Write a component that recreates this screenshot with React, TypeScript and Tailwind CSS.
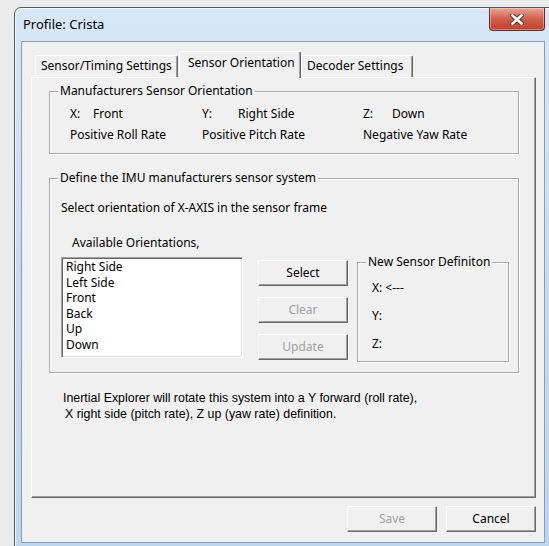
import React from "react";

const ui = "font-['Noto_Sans',sans-serif] text-[12px] text-black";

// classic raised 3D push button
const Btn = ({ label, disabled = false, className = "" }: { label: string; disabled?: boolean; className?: string }) => (
  <div
    className={`flex h-[26px] w-[90px] items-center justify-center border border-t-white border-l-white border-r-[#696969] border-b-[#696969] bg-[#f0f0f0] shadow-[inset_-1px_-1px_0_#a0a0a0] leading-none ${
      disabled ? "text-[#a0a0a0]" : "text-black"
    } ${className}`}
  >
    {label}
  </div>
);

// etched group box; padding goes on the inner div so the legend stays put
const Group = ({
  title,
  className = "",
  inner = "",
  children,
}: {
  title: string;
  className?: string;
  inner?: string;
  children: React.ReactNode;
}) => (
  <fieldset className={`border border-[#a9a9a9] shadow-[inset_1px_1px_0_white,1px_1px_0_white] ${className}`}>
    <legend className="ml-[8px] bg-[#f0f0f0] px-[2px] leading-[14px]">{title}</legend>
    <div className={inner}>{children}</div>
  </fieldset>
);

const Tab = ({ label, active = false, className = "" }: { label: string; active?: boolean; className?: string }) => (
  <div
    className={`flex items-start border-l border-t border-r border-t-white border-l-white border-r-[#696969] rounded-t-[2px] bg-[#f0f0f0] shadow-[inset_-1px_0_0_#a0a0a0] leading-[16px] ${
      active ? "relative z-10 h-[27px] pt-[3px]" : "mb-[1px] h-[22px] pt-[2px]"
    } ${className}`}
  >
    {label}
  </div>
);

const orientations = ["Right Side", "Left Side", "Front", "Back", "Up", "Down"];

export default function App() {
  return (
    <div className={`${ui} h-[546px] w-[549px] overflow-hidden bg-[#ebebeb] pl-[14px] pt-[7px]`}>
      {/* window frame */}
      <div className="flex h-[560px] w-[540px] flex-col rounded-tl-[7px] border border-[#4f5866] bg-gradient-to-b from-[#d8e7f7] via-[#c6dbf2] to-[#bdd5ef] shadow-[inset_1px_1px_0_rgba(255,255,255,0.75)]">
        {/* title bar */}
        <div className="flex h-[33px] items-start">
          <span className="self-center pl-[8px] text-[13px] leading-none">Profile: Crista</span>
          <div className="ml-auto mr-[8px] flex h-[23px] w-[56px] items-center justify-center rounded-b-[4px] border border-t-0 border-[#6f2a21] bg-gradient-to-b from-[#e8a594] via-[#cf5f4c] to-[#c0412d] shadow-[inset_0_0_0_1px_rgba(255,255,255,0.35)]">
            <svg width="14" height="11" viewBox="0 0 14 11">
              <path d="M2.5 1.5 L11.5 9.5 M11.5 1.5 L2.5 9.5" stroke="#5a2a24" strokeWidth="4.6" strokeLinecap="square" />
              <path d="M2.5 1.5 L11.5 9.5 M11.5 1.5 L2.5 9.5" stroke="#ffffff" strokeWidth="2.8" strokeLinecap="square" />
            </svg>
          </div>
        </div>

        {/* client area */}
        <div className="ml-[6px] h-[502px] w-[524px] border border-[#8a9cb1] bg-[#f0f0f0] pl-[9px] pt-[9px]">
          <div className="w-[505px]">
            {/* tab strip */}
            <div className="mb-[-1px] flex h-[27px] items-end pl-[4px]">
              <Tab label="Sensor/Timing Settings" className="w-[143px] pl-[5px]" />
              <Tab label="Sensor Orientation" active className="ml-[1px] w-[122px] pl-[8px]" />
              <Tab label="Decoder Settings" className="w-[112px] pl-[5px]" />
            </div>

            {/* tab page */}
            <div className="flex h-[421px] flex-col border border-t-white border-l-white border-r-[#696969] border-b-[#696969] shadow-[inset_-1px_-1px_0_#a0a0a0] pl-[17px] pt-[6px]">
              <Group title="Manufacturers Sensor Orientation" className="w-[470px]" inner="pb-[10px] pl-[20px] pt-[8px]">
                <div className="grid grid-cols-[132px_161px_1fr] gap-y-[5px] leading-[16px]">
                  <div className="flex">
                    <span className="w-[23px]">X:</span>
                    <span>Front</span>
                  </div>
                  <div className="flex">
                    <span className="w-[36px]">Y:</span>
                    <span>Right Side</span>
                  </div>
                  <div className="flex">
                    <span className="w-[29px]">Z:</span>
                    <span>Down</span>
                  </div>
                  <div>Positive Roll Rate</div>
                  <div>Positive Pitch Rate</div>
                  <div>Negative Yaw Rate</div>
                </div>
              </Group>

              <Group
                title="Define the IMU manufacturers sensor system"
                className="mt-[17px] w-[470px]"
                inner="pb-[10px] pl-[11px] pt-[15px]"
              >
                <div className="leading-[16px]">Select orientation of X-AXIS in the sensor frame</div>
                <div className="mt-[19px] pl-[11px] leading-[16px]">Available Orientations,</div>
                <div className="mt-[4px] flex items-start">
                  <div className="mt-[2px] h-[101px] w-[182px] border border-t-[#a0a0a0] border-l-[#a0a0a0] border-r-white border-b-white bg-white pl-[4px] pt-[1px] shadow-[inset_1px_1px_0_#696969,inset_-1px_-1px_0_#e3e3e3]">
                    {orientations.map((o) => (
                      <div key={o} className="leading-[15.5px]">
                        {o}
                      </div>
                    ))}
                  </div>
                  <div className="ml-[15px] mt-[5px] flex flex-col gap-[11px]">
                    <Btn label="Select" />
                    <Btn label="Clear" disabled />
                    <Btn label="Update" disabled />
                  </div>
                  <Group title="New Sensor Definiton" className="ml-[9px] h-[107px] w-[152px]" inner="pl-[14px] pt-[11px]">
                    <div className="flex flex-col gap-[12px] leading-[16px]">
                      <div>X: &lt;---</div>
                      <div>Y:</div>
                      <div>Z:</div>
                    </div>
                  </Group>
                </div>
              </Group>

              <div className="mt-[17px] pl-[14px] font-['Liberation_Sans',sans-serif] text-[12.4px] leading-[16px]">
                <div>Inertial Explorer will rotate this system into a Y forward (roll rate),</div>
                <div className="pl-[2px]">X right side (pitch rate), Z up (yaw rate) definition.</div>
              </div>
            </div>

            {/* dialog buttons */}
            <div className="mt-[8px] flex justify-end gap-[9px]">
              <Btn label="Save" disabled className="w-[89px]" />
              <Btn label="Cancel" className="w-[89px]" />
            </div>
          </div>
        </div>
      </div>
    </div>
  );
}
